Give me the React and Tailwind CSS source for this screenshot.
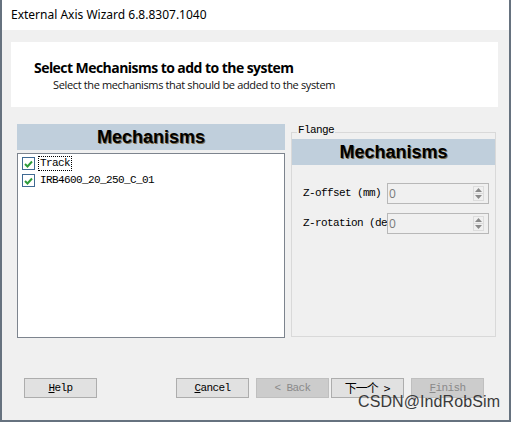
import React from "react";

const mono = { fontFamily: '"Liberation Mono", "DejaVu Sans Mono", monospace' };

function Check() {
  return (
    <span className="flex h-[13px] w-[13px] shrink-0 items-center justify-center border border-[#3f6a93] bg-white">
      <svg width="9" height="8" viewBox="0 0 9 8">
        <path d="M1 4 L3.5 6.5 L8 1.5" fill="none" stroke="#2e9b3a" strokeWidth="2" />
      </svg>
    </span>
  );
}

function Spin({ label }) {
  return (
    <div className="flex h-[21px] items-center">
      <span className="w-[84px] overflow-hidden whitespace-nowrap text-[11px] tracking-[-0.6px] text-black" style={mono}>
        {label}
      </span>
      <div className="flex h-[21px] w-[102px] items-center justify-between border border-[#b8b8b8] bg-[#f0f0f0] pr-[4px]">
        <span className="pl-[1px] text-[12px] text-[#7a7a7a]" style={{ fontFamily: '"Open Sans", sans-serif' }}>0</span>
        <div className="flex h-[15px] w-[11px] flex-col border border-[#dcdcdc]">
          <span className="flex flex-1 items-center justify-center border-b border-[#dcdcdc]">
            <svg width="7" height="4" viewBox="0 0 7 4"><path d="M0 4 L3.5 0 L7 4 Z" fill="#8a8a8a" /></svg>
          </span>
          <span className="flex flex-1 items-center justify-center">
            <svg width="7" height="4" viewBox="0 0 7 4"><path d="M0 0 L3.5 4 L7 0 Z" fill="#8a8a8a" /></svg>
          </span>
        </div>
      </div>
    </div>
  );
}

function Btn({ children, disabled }) {
  return (
    <div
      className={
        "flex h-[20px] w-[73px] items-center justify-center border text-[11px] tracking-[-0.6px] " +
        (disabled ? "border-[#bfbfbf] bg-[#cccccc] text-[#8a8a8a]" : "border-[#adadad] bg-[#e1e1e1] text-black")
      }
      style={mono}
    >
      {children}
    </div>
  );
}

export default function App() {
  return (
    <div className="relative flex h-[422px] w-[511px] flex-col border-x-2 border-b-2 border-[#66727f] bg-[#f0f0f0]">
      {/* title bar */}
      <div className="flex h-[30px] items-center bg-white pl-[9px] text-[12px] text-black" style={{ fontFamily: '"Noto Sans", sans-serif' }}>
        External Axis Wizard 6.8.8307.1040
      </div>

      {/* header panel */}
      <div className="ml-[9px] mr-[11px] mt-[12px] flex h-[65px] flex-col bg-white pl-[23px] pt-[16px]" style={{ fontFamily: '"Open Sans", sans-serif' }}>
        <div className="text-[14px] font-bold leading-[20px] tracking-[-0.55px] text-black">Select Mechanisms to add to the system</div>
        <div className="pl-[19px] text-[11px] leading-[13px] tracking-[-0.36px] text-[#111]">Select the mechanisms that should be added to the system</div>
      </div>

      {/* body */}
      <div className="ml-[15px] mt-[17px] flex gap-[6px]">
        <div className="flex w-[268px] flex-col gap-[3px]">
          <div className="flex h-[26px] items-center justify-center bg-[#c0cfdc] text-[18px] font-bold text-black [text-shadow:1px_1px_0_#7a6a4a]" style={{ fontFamily: '"Liberation Sans", Arial, sans-serif' }}>
            Mechanisms
          </div>
          <div className="flex h-[185px] flex-col gap-[3px] border border-[#7d848e] bg-white pl-[4px] pt-[2px]">
            <div className="flex items-center gap-[3px]">
              <Check />
              <span className="border border-dotted border-black px-[1px] text-[11px] leading-[13px] tracking-[-0.6px] text-black" style={mono}>Track</span>
            </div>
            <div className="flex items-center gap-[3px]">
              <Check />
              <span className="px-[2px] text-[11px] leading-[13px] tracking-[-0.6px] text-black" style={mono}>IRB4600_20_250_C_01</span>
            </div>
          </div>
        </div>

        <div className="relative mt-[8px] flex h-[205px] w-[205px] flex-col border border-[#d9d9d9]">
          <span className="absolute left-[5px] top-[-9px] bg-[#f0f0f0] px-[1px] text-[11px] leading-[13px] tracking-[-0.6px] text-black" style={mono}>Flange</span>
          <div className="mt-[6px] flex h-[26px] items-center justify-center bg-[#c0cfdc] text-[18px] font-bold text-black [text-shadow:1px_1px_0_#7a6a4a]" style={{ fontFamily: '"Liberation Sans", Arial, sans-serif' }}>
            Mechanisms
          </div>
          <div className="ml-[11px] mt-[18px] flex flex-col gap-[9px]">
            <Spin label="Z-offset (mm)" />
            <Spin label="Z-rotation (deg)" />
          </div>
        </div>
      </div>

      {/* buttons */}
      <div className="ml-[22px] mt-[40px] flex">
        <Btn><span><u>H</u>elp</span></Btn>
        <div className="ml-[79px] flex gap-[7px]">
          <Btn><span><u>C</u>ancel</span></Btn>
          <Btn disabled>&lt; Back</Btn>
        </div>
        <div className="ml-[2px] flex h-[20px] w-[73px] items-center justify-center gap-[6px] border border-[#adadad] bg-[#e1e1e1] text-[12px] text-black" style={{ fontFamily: '"Noto Sans CJK SC", sans-serif' }}>
          <span className="tracking-[-1px]">下一个</span>
          <span>&gt;</span>
        </div>
        <div className="ml-[7px]">
          <Btn disabled><span><u>F</u>inish</span></Btn>
        </div>
      </div>

      <span className="absolute left-[356px] top-[392px] text-[16px] leading-[20px] tracking-[0.1px] text-[#3a3a3a]" style={{ fontFamily: '"Liberation Sans", Arial, sans-serif' }}>
        CSDN@IndRobSim
      </span>
    </div>
  );
}
